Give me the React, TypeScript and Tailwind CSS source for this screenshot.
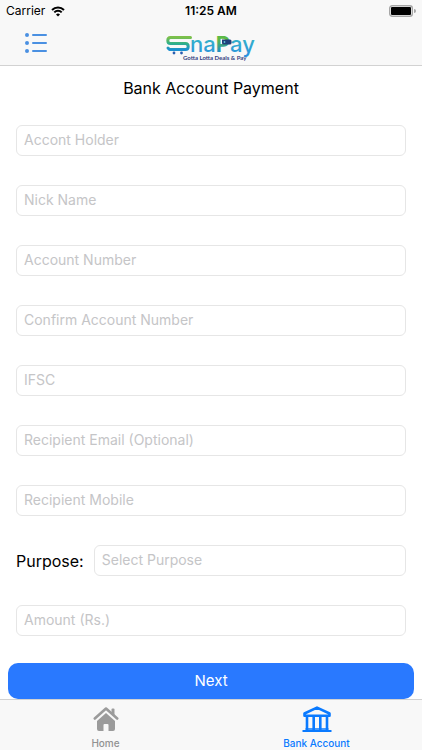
import React from 'react';

const Logo = () => (
  <svg width="100" height="43" viewBox="0 0 100 43" role="img" aria-label="SnaPay">
    <defs>
      <linearGradient id="cart" x1="0" y1="0" x2="0" y2="1">
        <stop offset="0" stopColor="#7cc04b" />
        <stop offset="0.5" stopColor="#2fb08a" />
        <stop offset="1" stopColor="#1b8fd0" />
      </linearGradient>
      <linearGradient id="pay" x1="0" y1="0" x2="0" y2="1">
        <stop offset="0.3" stopColor="#5cba47" />
        <stop offset="0.8" stopColor="#1f8fc4" />
      </linearGradient>
      <linearGradient id="word" x1="0" y1="0" x2="0" y2="1">
        <stop offset="0.3" stopColor="#36b3c9" />
        <stop offset="1" stopColor="#2a8fe0" />
      </linearGradient>
    </defs>
    <path
      d="M29.500 15.500H9.500C7.500 15.500 6.800 16.800 6.800 18.500S7.500 21.500 9.500 21.500H24.500C26.500 21.500 27.200 22.800 27.200 24.500S26.500 27.500 24.500 27.500H8.500L7 26"
      fill="none"
      stroke="url(#cart)"
      strokeWidth="3"
      strokeLinecap="round"
      strokeLinejoin="round"
    />
    <circle cx="13" cy="31" r="1.400" fill="#2b5fb0" />
    <circle cx="20.500" cy="31" r="1.400" fill="#2b5fb0" />
    <text y="30" fontFamily="Inter, sans-serif" fontSize="22" fontWeight="500" fill="url(#word)">
      <tspan x="29">na</tspan>
      <tspan fontWeight="700" fill="url(#pay)">P</tspan>
      <tspan>ay</tspan>
    </text>
    <path d="M61 17.500h8q1.500 0 1.500 1.500v2q0 1.500-1.500 1.500h-6.500q-1.500 0-1.500-1.500z" fill="#1d3f7a" />
    <circle cx="63.500" cy="20" r="0.900" fill="#5fc3d6" />
    <text x="22" y="38" fontFamily="Lato, sans-serif" fontSize="6" fontWeight="700" fill="#34407f">
      Gotta Lotta Deals &amp; Pay
    </text>
  </svg>
);

const StatusBar = () => (
  <div className="grid grid-cols-3 items-center px-[6px] h-[22px] text-xs">
    <div className="flex items-center gap-[6px]">
      <span>Carrier</span>
      <svg width="14" height="11" viewBox="0 0 14 11" fill="none" stroke="black" strokeWidth="2">
        <path d="M1 4a8.500 8.500 0 0 1 12 0M3.300 6.400a5.200 5.200 0 0 1 7.400 0" />
        <path d="M7 10.500L5 8.400a2.800 2.800 0 0 1 4 0z" fill="black" stroke="none" />
      </svg>
    </div>
    <span className="text-center font-semibold">11:25 AM</span>
    <svg className="justify-self-end" width="27" height="12" viewBox="0 0 27 12">
      <rect x="0.700" y="0.700" width="22.600" height="10.600" rx="2.500" fill="white" stroke="#a6a6a6" strokeWidth="1.400" />
      <rect x="2" y="2" width="20" height="8" rx="1" fill="black" />
      <path d="M25 4a2 2 0 0 1 0 4z" fill="#a6a6a6" />
    </svg>
  </div>
);

interface FieldProps {
  id: string;
  placeholder: string;
  type?: string;
}

const Field: React.FC<FieldProps> = ({ id, placeholder, type = 'text' }) => (
  <input
    id={id}
    type={type}
    placeholder={placeholder}
    aria-label={id === 'purpose' ? undefined : placeholder}
    className="block w-full min-w-0 h-[31px] rounded-md border border-[#e6e6e6] bg-white px-[7px] pb-[2px] text-sm placeholder:text-[#c5c5c7] outline-none focus:border-[#2979ff]"
  />
);

const fields: FieldProps[] = [
  { id: 'holder', placeholder: 'Accont Holder' },
  { id: 'nick', placeholder: 'Nick Name' },
  { id: 'account', placeholder: 'Account Number' },
  { id: 'confirm', placeholder: 'Confirm Account Number' },
  { id: 'ifsc', placeholder: 'IFSC' },
  { id: 'email', placeholder: 'Recipient Email (Optional)', type: 'email' },
  { id: 'mobile', placeholder: 'Recipient Mobile', type: 'tel' },
];

export default function App() {
  return (
    <div className="min-h-screen flex flex-col bg-white text-black font-['Inter',sans-serif]">
      <header className="bg-[#f8f8f8] border-b border-[#d2d2d2]">
        <StatusBar />
        <div className="grid grid-cols-3 items-center h-[43px]">
          <button type="button" aria-label="Menu" className="ml-6 w-6 pb-[2px]">
            <svg width="24" height="22" viewBox="0 0 24 22" stroke="#4a90e2" strokeWidth="2" strokeLinecap="round">
              <path d="M9 3h13M9 11h13M9 19h13" />
              <path d="M3 3h0M3 11h0M3 19h0" strokeWidth="4" />
            </svg>
          </button>
          <div className="justify-self-center">
            <Logo />
          </div>
        </div>
      </header>

      <main className="grow px-2">
        <form onSubmit={(e) => e.preventDefault()}>
          <h1 className="pt-[10px] text-center text-base leading-6">Bank Account Payment</h1>
          <div className="flex flex-col gap-[29px] px-2 pt-[25px]">
            {fields.map((field) => (
              <Field key={field.id} {...field} />
            ))}
            <div className="flex items-center gap-[10px]">
              <label htmlFor="purpose" className="text-base">
                Purpose:
              </label>
              <Field id="purpose" placeholder="Select Purpose" />
            </div>
            <Field id="amount" placeholder="Amount (Rs.)" />
          </div>
          <button type="submit" className="mt-[27px] block h-9 w-full rounded-[10px] bg-[#2979ff] text-white text-[15px]">
            Next
          </button>
        </form>
      </main>

      <nav className="grid grid-cols-2 h-[51px] border-t border-[#d2d2d2] bg-[#f8f8f8] text-[10px] leading-3 font-medium">
        <a href="#home" className="flex flex-col items-center gap-[5px] pt-[6px] text-[#929292]">
          <svg width="26" height="26" viewBox="0 0 26 26" fill="#9b9b9b">
            <path d="M1.800 12.500L13 2.500l11.200 10" fill="none" stroke="#9b9b9b" strokeWidth="2.600" strokeLinecap="round" strokeLinejoin="round" />
            <path d="M18.500 3.500q0-1 1-1h1q1 0 1 1V10l-3-3z" />
            <path d="M13 7l9 8v8q0 2-2 2h-4.500v-6q0-1-1-1h-3q-1 0-1 1v6H6q-2 0-2-2v-8z" />
          </svg>
          Home
        </a>
        <a href="#bank" aria-current="page" className="flex flex-col items-center gap-[5px] pt-[6px] text-[#0a7aff]">
          <svg width="30" height="26" viewBox="0 0 30 26" fill="none" stroke="#0a7aff" strokeLinejoin="round">
            <path d="M2.500 7.500L15 1.600l12.500 5.900v2.300h-25z" strokeWidth="2.600" />
            <path d="M5 10v14M11.700 10v14M18.300 10v14M25 10v14" strokeWidth="2.600" />
            <path d="M3.500 23h23" strokeWidth="1.500" />
            <path d="M0.500 25h29" strokeWidth="2" />
          </svg>
          Bank Account
        </a>
      </nav>
    </div>
  );
}
